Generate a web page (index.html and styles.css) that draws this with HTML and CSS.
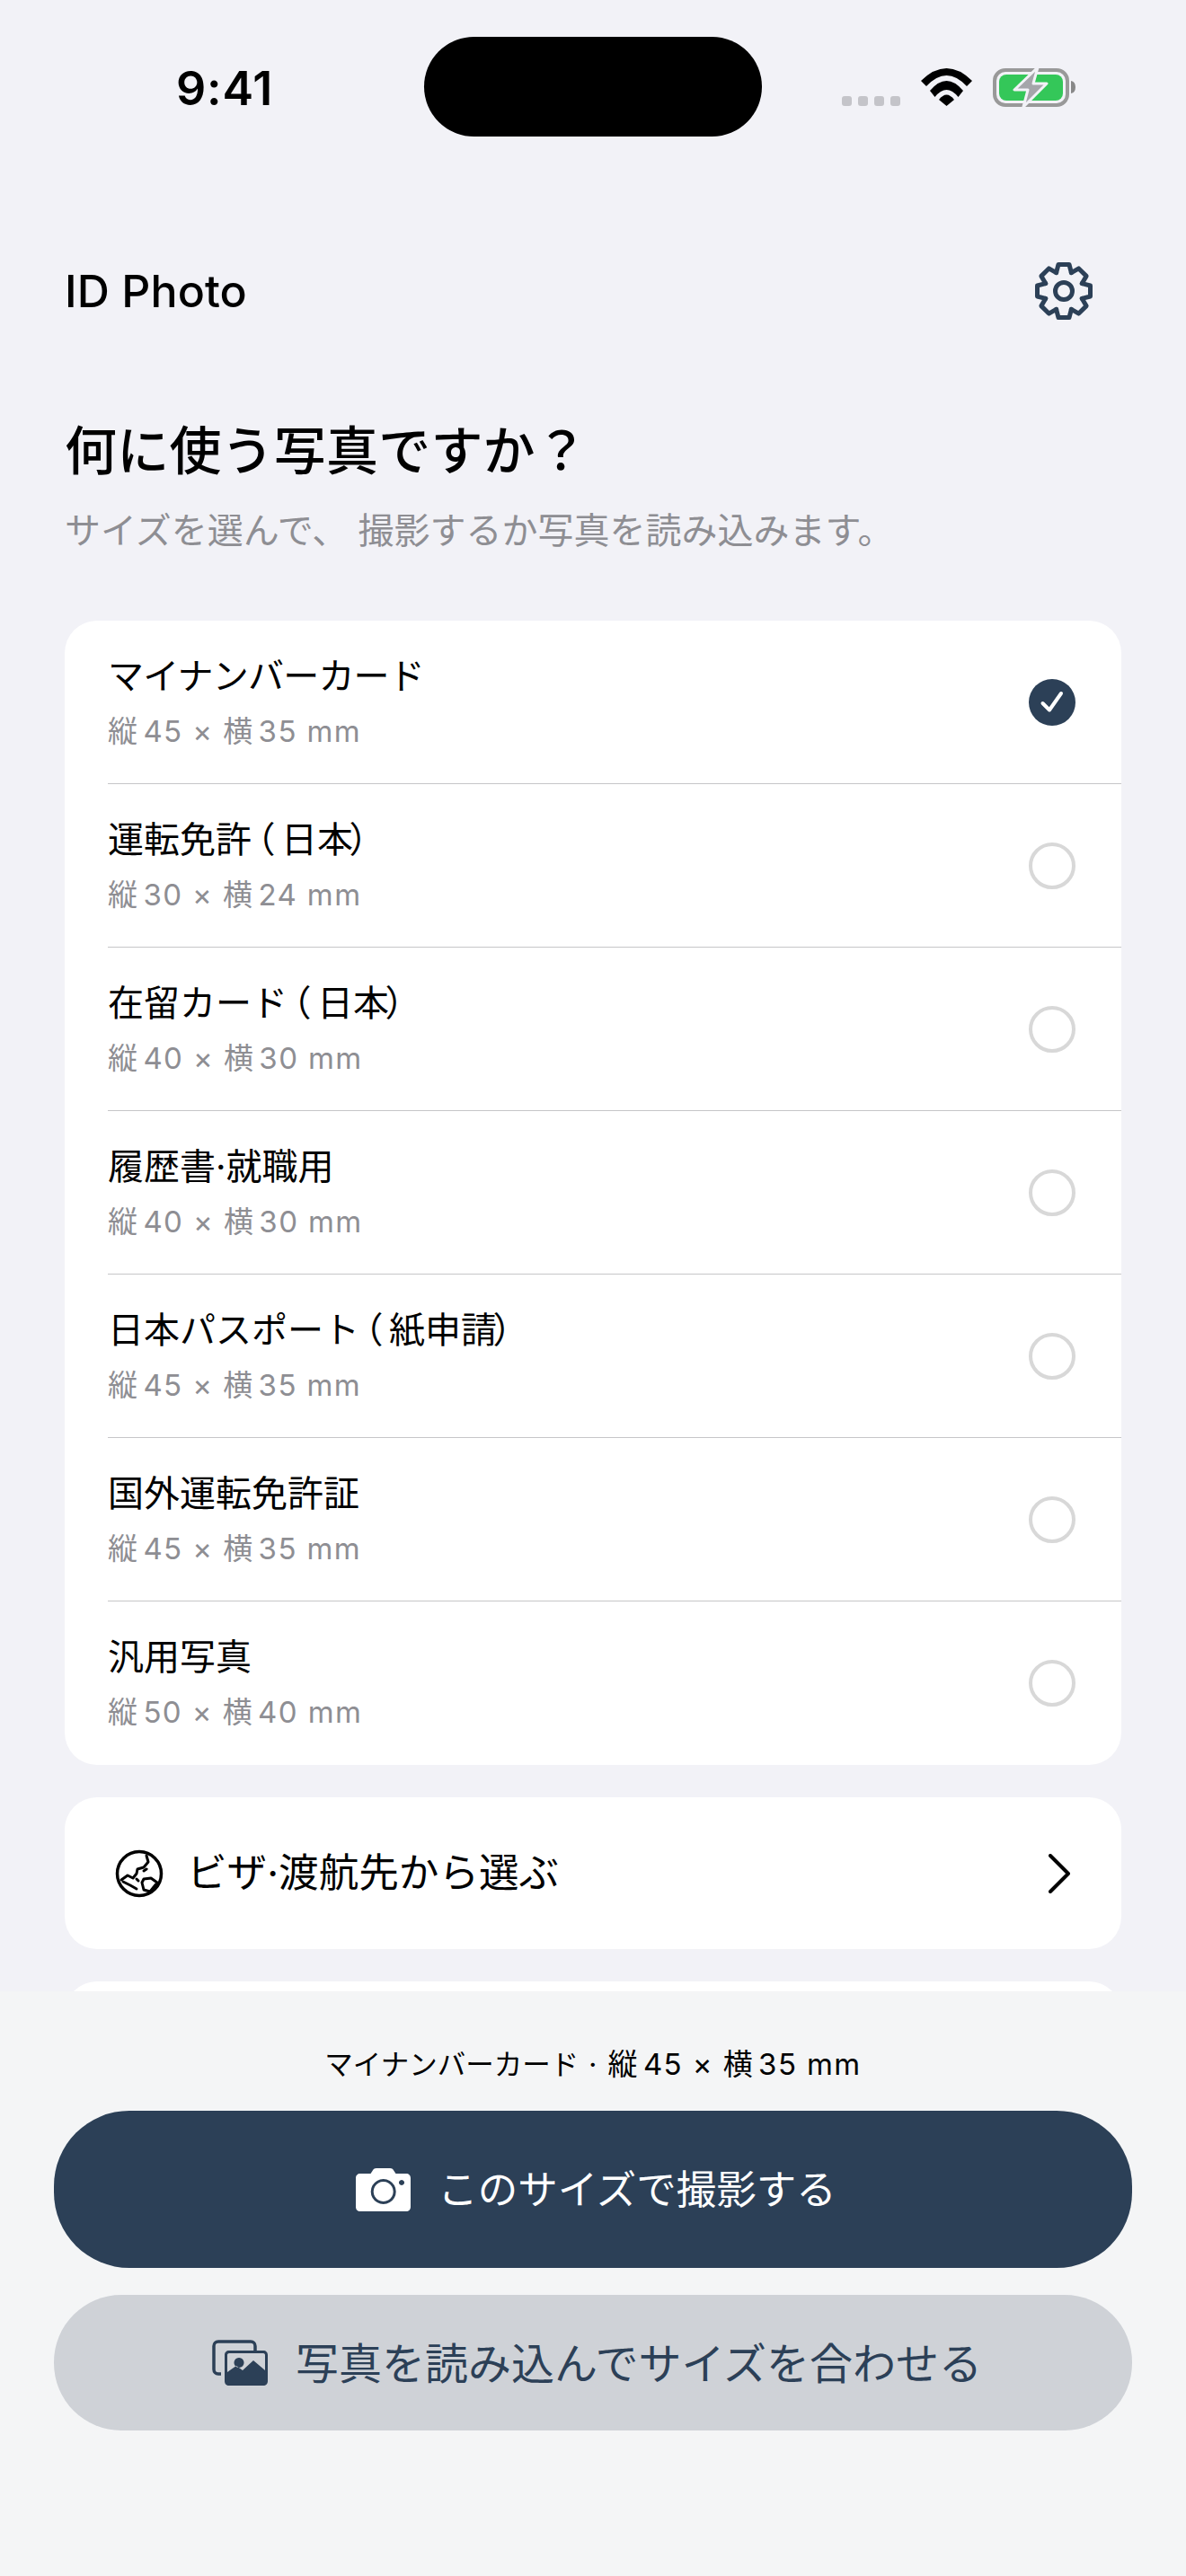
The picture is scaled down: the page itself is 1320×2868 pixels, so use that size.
FILE: index.html
```html
<!DOCTYPE html>
<html lang="ja">
<head>
<meta charset="utf-8">
<title>ID Photo</title>
<link rel="stylesheet" href="styles.css">
</head>
<body>
<div class="screen">
  <div class="status">
    <span class="time">9:41</span>
    <div class="island"></div>
    <div class="status-right">
      <div class="dots"><i></i><i></i><i></i><i></i></div>
      <svg class="wifi" viewBox="0 0 57 42"><path d="M0 14Q28.500-14 57 14L51 20Q28.500-4 6 20Z"/><path d="M10 25Q28.500 3 47 25L41.500 32Q28.500 16 15.500 32Z"/><path d="M20 35Q28.500 24 37 35L28.500 42Z"/></svg>
      <svg class="battery" viewBox="0 0 92 46"><rect x="2" y="4" width="81" height="39" rx="12" fill="none" stroke="#999" stroke-width="4"/><rect x="7" y="9" width="71" height="29" rx="8" fill="#34c759"/><path d="M87 16q5 1 5 7t-5 7z" fill="#888"/><path d="M50 1 24 26h15l-5 19 26-26H45z" fill="#a5a5aa" stroke="#f2f2f7" stroke-width="3" stroke-linejoin="round"/></svg>
    </div>
  </div>

  <main class="content">
    <header class="app-head">
      <h1 class="brand">ID Photo</h1>
      <svg class="gear" viewBox="-34 -34 68 68" fill="none" stroke="#2c4057" stroke-width="5" stroke-linejoin="round" stroke-linecap="round">
        <defs><path id="tooth" d="M-8.400-20.300-6-29.500H6L8.400-20.300"/></defs>
        <use href="#tooth"/><use href="#tooth" transform="rotate(45)"/><use href="#tooth" transform="rotate(90)"/><use href="#tooth" transform="rotate(135)"/><use href="#tooth" transform="rotate(180)"/><use href="#tooth" transform="rotate(225)"/><use href="#tooth" transform="rotate(270)"/><use href="#tooth" transform="rotate(315)"/>
        <circle r="9.500"/>
      </svg>
    </header>

    <h2 class="question">何に使う写真ですか？</h2>
    <p class="lead">サイズを選んで、 撮影するか写真を読み込みます。</p>

    <section class="card list">
      <div class="row"><div class="row-text"><div class="row-title kana">マイナンバーカード</div><div class="row-sub">縦<span class="num">45</span> × 横<span class="num">35</span> mm</div></div>
        <svg class="radio" viewBox="0 0 52 52"><circle cx="26" cy="26" r="26" fill="#2c4057"/><path d="M15.500 27 23 34.500 36 16" fill="none" stroke="#fff" stroke-width="4" stroke-linecap="round" stroke-linejoin="round"/></svg></div>
      <div class="row"><div class="row-text"><div class="row-title">運転免許<span class="po">（</span>日本<span class="pc">）</span></div><div class="row-sub">縦<span class="num">30</span> × 横<span class="num">24</span> mm</div></div><div class="radio off"></div></div>
      <div class="row"><div class="row-text"><div class="row-title">在留カード<span class="po">（</span>日本<span class="pc">）</span></div><div class="row-sub">縦<span class="num">40</span> × 横<span class="num">30</span> mm</div></div><div class="radio off"></div></div>
      <div class="row"><div class="row-text"><div class="row-title">履歴書·就職用</div><div class="row-sub">縦<span class="num">40</span> × 横<span class="num">30</span> mm</div></div><div class="radio off"></div></div>
      <div class="row"><div class="row-text"><div class="row-title">日本パスポート<span class="po">（</span>紙申請<span class="pc">）</span></div><div class="row-sub">縦<span class="num">45</span> × 横<span class="num">35</span> mm</div></div><div class="radio off"></div></div>
      <div class="row"><div class="row-text"><div class="row-title">国外運転免許証</div><div class="row-sub">縦<span class="num">45</span> × 横<span class="num">35</span> mm</div></div><div class="radio off"></div></div>
      <div class="row"><div class="row-text"><div class="row-title">汎用写真</div><div class="row-sub">縦<span class="num">50</span> × 横<span class="num">40</span> mm</div></div><div class="radio off"></div></div>
    </section>

    <section class="card visa">
      <svg class="globe" viewBox="-27 -27 54 54" fill="none" stroke="#000" stroke-width="3" stroke-linecap="round" stroke-linejoin="round"><circle r="24.500" stroke-width="3.500"/><path d="M8-20 10-13 5-7-2-5-3 0-7 5-13 2-20 7"/><path d="M-18 9-10 13-3 17"/><path d="M3 10 5 6 13 5 20 10 12 20 5 18Z"/><path d="M5-3 8-5"/><path d="M-3 6-1 8"/></svg>
      <span class="visa-text">ビザ·渡航先から選ぶ</span>
      <svg class="chevron" viewBox="0 0 24 44" fill="none" stroke="#000" stroke-width="4" stroke-linecap="round" stroke-linejoin="round"><path d="M2 2 22 22 2 42"/></svg>
    </section>

    <section class="card stub"></section>
  </main>

  <footer class="panel">
    <p class="summary"><span class="summary-name">マイナンバーカード</span> · 縦<span class="num">45</span> × 横<span class="num">35</span> mm</p>
    <button class="btn primary">
      <svg class="cam" viewBox="0 0 61 48"><path fill-rule="evenodd" fill="#fff" d="M23 0h15c2.500 0 3.500 1 4.500 3l2 3H56c3 0 5 2 5 5v32c0 3-2 5-5 5H5c-3 0-5-2-5-5V11c0-3 2-5 5-5h11.500l2-3c1-2 2-3 4.500-3ZM30.700 12a14 14 0 1 0 .01 0ZM30.700 15a11 11 0 1 1-.01 0ZM51 13a3 3 0 1 0 .01 0Z"/></svg>
      <span>このサイズで撮影する</span>
    </button>
    <button class="btn secondary">
      <svg class="pics" viewBox="0 0 62 51"><path d="M10 38H7c-3 0-5-2-5-5V7c0-3 2-5 5-5h36c3 0 5 2 5 5v5" fill="none" stroke="#2c4057" stroke-width="3.500"/><path fill-rule="evenodd" fill="#2c4057" d="M19 12h38c3 0 5 2 5 5v29c0 3-2 5-5 5H19c-3 0-5-2-5-5V17c0-3 2-5 5-5Zm0 3c-1.500 0-2 1-2 2v19l10-7 7 5 12-11 13 11V17c0-1-.500-2-2-2ZM30 20a5.500 5.500 0 1 0 .01 0Z"/></svg>
      <span>写真を読み込んでサイズを合わせる</span>
    </button>
  </footer>
</div>
</body>
</html>
```
FILE: styles.css
```css
* { box-sizing: border-box; }
html, body { margin: 0; padding: 0; }
body {
  background: #f2f2f7;
  font-family: Inter, "Noto Sans CJK JP", sans-serif;
  color: #000;
}
.screen { position: relative; width: 1320px; height: 2868px; overflow: hidden; }

.status { height: 288px; padding-top: 41px; display: flex; align-items: flex-start; position: relative; }
.time { width: 472px; padding-left: 196px; padding-top: 33px; font-size: 52px; line-height: 50px; font-weight: 600; letter-spacing: 0.8px; }
.island { width: 376px; height: 111px; border-radius: 56px; background: #000; }
.status-right { display: flex; align-items: flex-end; height: 77px; margin-left: 89px; }
.dots { display: flex; gap: 7px; }
.dots i { width: 11px; height: 11px; border-radius: 3px; background: #c4c4c9; }
.wifi { width: 57px; height: 42px; margin-left: 23px; }
.battery { width: 92px; height: 46px; margin-left: 23px; margin-bottom: -2px; }

.content { padding: 0 72px; }
.app-head { height: 72px; display: flex; align-items: center; justify-content: space-between; padding-right: 30px; }
.brand { margin: 0; font-size: 50px; line-height: 72px; font-weight: 550; letter-spacing: 0.1px; }
.gear { width: 68px; height: 68px; }
.question { margin: 106px 0 0; font-size: 58px; line-height: 72px; font-weight: 500; letter-spacing: 0.2px; }
.lead { margin: 25px 0 0; font-size: 40px; line-height: 56px; color: #8e8e93; }

.card { background: #fff; border-radius: 36px; }
.list { margin-top: 72px; }
.row { height: 182px; padding: 0 51px 0 48px; display: flex; justify-content: space-between; align-items: center; position: relative; }
.row:not(:last-child)::after { content: ""; position: absolute; left: 48px; right: 0; bottom: 0; height: 1px; background: #c6c6c8; }
.row-title { font-size: 40px; line-height: 50px; }
.row-title.kana { letter-spacing: -0.8px; }
.po { font-feature-settings: "palt"; margin-left: 5px; margin-right: 8px; }
.pc { font-feature-settings: "palt"; margin-left: -3px; }
.row-sub { margin-top: 13px; font-size: 33px; line-height: 46px; letter-spacing: 1.4px; color: #8e8e93; }
.num { margin-left: 5px; }
.radio { width: 52px; height: 52px; flex: none; }
.radio.off { border-radius: 50%; border: 4px solid #d8d8d8; }

.visa { margin-top: 36px; height: 169px; display: flex; align-items: center; padding: 0 57px 0 56px; }
.globe { width: 54px; height: 54px; flex: none; }
.visa-text { margin-left: 26px; margin-bottom: 2px; flex: 1; font-size: 44.6px; line-height: 60px; }
.chevron { width: 24px; height: 44px; }
.stub { margin-top: 36px; height: 170px; }

.panel { position: absolute; left: 0; right: 0; bottom: 0; height: 651px; background: #f4f5f6; padding: 59px 60px 0; }
.summary { margin: 0; height: 44px; text-align: center; font-size: 33px; line-height: 44px; letter-spacing: 1.4px; }
.summary-name { font-size: 31.5px; letter-spacing: 0; }
.btn { display: flex; align-items: center; justify-content: center; width: 100%; border: 0; padding: 0; font-family: inherit; }
.btn span { margin-bottom: 6px; }
.primary { margin-top: 30px; height: 175px; border-radius: 84px; background: #2c4057; color: #fff; font-size: 44.5px; gap: 30px; padding-left: 7px; }
.secondary { margin-top: 30px; height: 151px; border-radius: 75px; background: #cfd2d7; color: #2c4057; font-size: 48px; gap: 31px; padding-left: 9px; }
.cam { width: 61px; height: 48px; }
.pics { width: 62px; height: 51px; }
```
